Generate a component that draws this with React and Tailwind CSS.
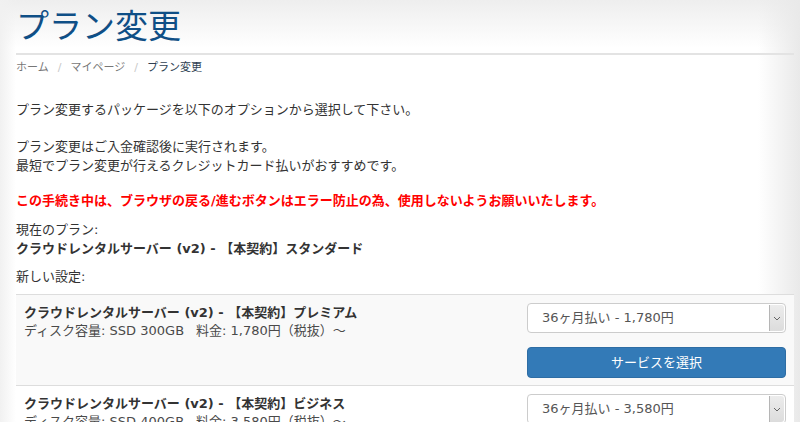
import React from "react";

const FONT = { fontFamily: '"DejaVu Sans", "Noto Sans CJK JP", sans-serif' };

function FakeSelect({ label }) {
  return (
    <div className="flex h-[30px] w-full items-stretch rounded-[4px] border border-[#cccccc] bg-white">
      <div className="flex flex-1 items-center pl-[14px] text-[13px] text-[#555555]">{label}</div>
      <div className="my-[1px] mr-[1px] flex w-[15px] items-center justify-center rounded-r-[3px] border-l border-[#b5b5b5] bg-[linear-gradient(to_bottom,#ececec,#dcdcdc)]">
        <svg width="8" height="5" viewBox="0 0 8 5" fill="none">
          <path d="M1 1l3 3 3-3" stroke="#666" strokeWidth="1" />
        </svg>
      </div>
    </div>
  );
}

function PlanRow({ name, disk, price, option, striped, showButton }) {
  return (
    <div
      className={`flex border-t border-[#dddddd] px-2 pt-[8px] pb-[7px] ${
        striped ? "bg-[#f9f9f9]" : "bg-white"
      }`}
    >
      <div className="flex-1 pt-px text-[13px] leading-[18px] text-[#333333]">
        <div className="font-bold">{name}</div>
        <div className="text-[#4a4a4a]">
          ディスク容量: SSD {disk}<span className="inline-block w-[12px]"></span>料金: {price}（税抜）～
        </div>
      </div>
      <div className="flex w-[259px] flex-col">
        <FakeSelect label={option} />
        {showButton && (
          <button className="mt-[14px] h-[31px] w-full rounded-[4px] border border-[#2e6da4] bg-[#337ab7] text-[13px] text-white">
            サービスを選択
          </button>
        )}
      </div>
    </div>
  );
}

export default function App() {
  return (
    <div
      style={FONT}
      className="min-h-[422px] w-full overflow-hidden bg-white bg-[linear-gradient(to_left,#e9e9e9,rgba(255,255,255,0)_42px),linear-gradient(to_right,#f1f1f1,rgba(255,255,255,0)_16px),linear-gradient(to_bottom,#eeeeee,#ffffff_48px)]"
    >
      <div className="ml-4 w-[778px] pt-[7px]">
        <h1 className="text-[33px] leading-[40px] font-normal text-[#0f4f86]">プラン変更</h1>
        <div className="mt-[6px] h-[2px] bg-[#e3e3e3]"></div>
        <div className="mt-[5px] flex items-center text-[11px] leading-[16px]">
          <span className="text-[#777777]">ホーム</span>
          <span className="px-[9px] text-[#c8c8c8]">/</span>
          <span className="text-[#777777]">マイページ</span>
          <span className="px-[9px] text-[#c8c8c8]">/</span>
          <span className="text-[#2f3f52]">プラン変更</span>
        </div>

        <div className="mt-[24px] text-[13px] leading-[19px] text-[#333333]">
          <p>プラン変更するパッケージを以下のオプションから選択して下さい。</p>
          <p className="mt-[18px]">プラン変更はご入金確認後に実行されます。</p>
          <p>最短でプラン変更が行えるクレジットカード払いがおすすめです。</p>
          <p className="mt-[16px] font-bold text-[#ff0000]">
            この手続き中は、ブラウザの戻る/進むボタンはエラー防止の為、使用しないようお願いいたします。
          </p>
          <p className="mt-[10px]">現在のプラン:</p>
          <p className="font-bold">クラウドレンタルサーバー (v2) - 【本契約】スタンダード</p>
          <p className="mt-[9px]">新しい設定:</p>
        </div>

        <div className="mt-[8px]">
          <PlanRow
            name="クラウドレンタルサーバー (v2) - 【本契約】プレミアム"
            disk="300GB"
            price="1,780円"
            option="36ヶ月払い - 1,780円"
            striped
            showButton
          />
          <PlanRow
            name="クラウドレンタルサーバー (v2) - 【本契約】ビジネス"
            disk="400GB"
            price="3,580円"
            option="36ヶ月払い - 3,580円"
            striped={false}
            showButton
          />
        </div>
      </div>
    </div>
  );
}
